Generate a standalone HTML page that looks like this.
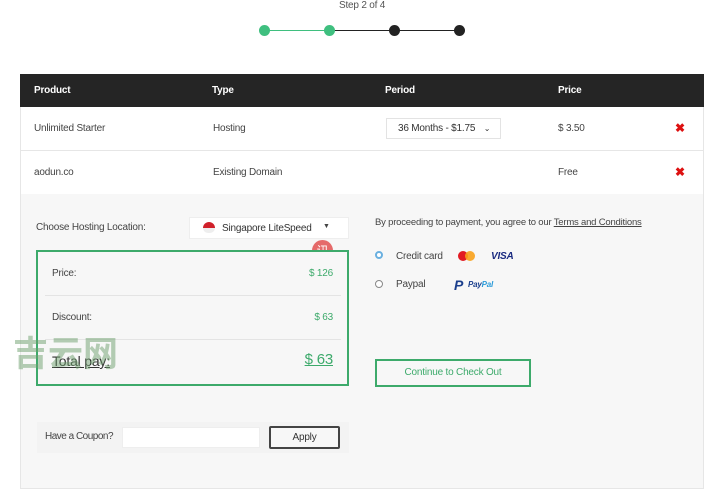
<!DOCTYPE html>
<html><head><meta charset="utf-8"><style>
*{margin:0;padding:0;box-sizing:border-box}
body{width:709px;height:500px;background:#fff;position:relative;overflow:hidden;font-family:"Liberation Sans",sans-serif;color:#444;font-size:10px;letter-spacing:-0.2px}
.a{position:absolute;white-space:nowrap}
.g{color:#3daa6b}
</style></head><body>
<div class="a" style="left:339px;top:0;font-size:10px;color:#555">Step 2 of 4</div>
<div class="a" style="left:265px;top:30px;width:64px;height:1px;background:#3fbf7f"></div>
<div class="a" style="left:329px;top:30px;width:130px;height:1px;background:#222"></div>
<div class="a" style="left:259px;top:25px;width:11px;height:11px;border-radius:50%;background:#3fbf7f"></div>
<div class="a" style="left:324px;top:25px;width:11px;height:11px;border-radius:50%;background:#3fbf7f"></div>
<div class="a" style="left:389px;top:25px;width:11px;height:11px;border-radius:50%;background:#222"></div>
<div class="a" style="left:454px;top:25px;width:11px;height:11px;border-radius:50%;background:#222"></div>

<div class="a" style="left:20px;top:74px;width:684px;height:33px;background:#252525;color:#fff;font-weight:bold;font-size:10px">
<span class="a" style="left:14px;top:11px">Product</span><span class="a" style="left:192px;top:11px">Type</span><span class="a" style="left:365px;top:11px">Period</span><span class="a" style="left:538px;top:11px">Price</span></div>
<div class="a" style="left:20px;top:107px;width:684px;height:44px;border:1px solid #e6e6e6;border-top:none">
<span class="a" style="left:13px;top:16px">Unlimited Starter</span><span class="a" style="left:192px;top:16px">Hosting</span>
<div class="a" style="left:365px;top:11px;width:115px;height:21px;border:1px solid #e3e3e3;background:#fff;padding:4px 0 0 11px;color:#333">36 Months - $1.75 <span style="font-size:8px;margin-left:6px">&#8964;</span></div>
<span class="a" style="left:537px;top:16px">$ 3.50</span><span class="a" style="left:654px;top:14px;color:#d11;font-weight:bold;font-size:12px">✖</span></div>
<div class="a" style="left:20px;top:151px;width:684px;height:44px;border:1px solid #e6e6e6;border-top:none">
<span class="a" style="left:13px;top:16px">aodun.co</span><span class="a" style="left:192px;top:16px">Existing Domain</span>
<span class="a" style="left:537px;top:16px">Free</span><span class="a" style="left:654px;top:14px;color:#d11;font-weight:bold;font-size:12px">✖</span></div>

<div class="a" style="left:20px;top:194px;width:684px;height:295px;background:#f7f7f7;border:1px solid #e6e6e6;border-top:none"></div>
<span class="a" style="left:36px;top:222px">Choose Hosting Location:</span>
<div class="a" style="left:189px;top:217px;width:160px;height:22px;background:#fff;border:1px solid #eee">
<span class="a" style="left:13px;top:4px;width:12px;height:6px;background:#d0202a;border-radius:6px 6px 0 0"></span><span class="a" style="left:13px;top:10px;width:12px;height:5px;background:#eee;border-radius:0 0 6px 6px"></span>
<span class="a" style="left:32px;top:5px;color:#333">Singapore LiteSpeed</span><span class="a" style="left:133px;top:5px;font-size:7px">▼</span></div>
<div class="a" style="left:312px;top:240px;width:21px;height:21px;border-radius:50%;background:#e56a6a;color:#fff;font-size:12px;text-align:center;line-height:21px;font-family:'Noto Sans CJK SC',sans-serif">讯</div>

<div class="a" style="left:36px;top:250px;width:313px;height:136px;border:2px solid #3daa6b;background:#f7f7f7">
<span class="a" style="left:14px;top:16px">Price:</span><span class="a g" style="right:14px;top:16px">$ 126</span>
<div class="a" style="left:7px;top:43px;width:296px;height:1px;background:#e4e4e4"></div>
<span class="a" style="left:14px;top:60px">Discount:</span><span class="a g" style="right:14px;top:60px">$ 63</span>
<div class="a" style="left:7px;top:87px;width:296px;height:1px;background:#e4e4e4"></div>
<span class="a" style="left:14px;top:101px;font-size:14px;text-decoration:underline;color:#333">Total pay:</span><span class="a g" style="right:14px;top:99px;font-size:15px;text-decoration:underline">$ 63</span></div>
<div class="a" style="left:13px;top:326px;font-size:35px;font-weight:bold;color:rgba(110,160,110,.5);font-family:'Noto Sans CJK SC',sans-serif;letter-spacing:0px">吉云网</div>

<span class="a" style="left:375px;top:217px;font-size:9.5px">By proceeding to payment, you agree to our <u>Terms and Conditions</u></span>
<span class="a" style="left:375px;top:251px;width:8px;height:8px;border-radius:50%;border:2px solid #6ab0e0;background:#fff"></span>
<span class="a" style="left:396px;top:251px;font-size:10px">Credit card</span>
<span class="a" style="left:458px;top:251px;width:10px;height:10px;border-radius:50%;background:#e21b23"></span><span class="a" style="left:465px;top:251px;width:10px;height:10px;border-radius:50%;background:#f8a11b;opacity:.9"></span>
<span class="a" style="left:491px;top:251px;font-size:10px;font-weight:bold;font-style:italic;color:#1a2a80">VISA</span>
<span class="a" style="left:375px;top:280px;width:8px;height:8px;border-radius:50%;border:1px solid #888;background:#fff"></span>
<span class="a" style="left:396px;top:279px;font-size:10px">Paypal</span>
<span class="a" style="left:454px;top:277px;font-size:14px;font-weight:bold;font-style:italic;color:#1a3e8c">P</span>
<span class="a" style="left:468px;top:280px;font-size:8px;font-weight:bold;font-style:italic;color:#1a3e8c">Pay<span style="color:#2a9ad8">Pal</span></span>
<div class="a" style="left:375px;top:359px;width:156px;height:28px;border:2px solid #3daa6b;color:#3daa6b;text-align:center;line-height:24px">Continue to Check Out</div>

<div class="a" style="left:37px;top:422px;width:312px;height:31px;background:#f3f3f3"></div>
<span class="a" style="left:45px;top:431px;letter-spacing:-0.5px">Have a Coupon?</span>
<div class="a" style="left:122px;top:427px;width:138px;height:21px;background:#fff;border:1px solid #eee"></div>
<div class="a" style="left:269px;top:426px;width:71px;height:23px;border:2px solid #444;border-radius:2px;background:#f7f7f7;text-align:center;line-height:19px;color:#333">Apply</div>
</body></html>
